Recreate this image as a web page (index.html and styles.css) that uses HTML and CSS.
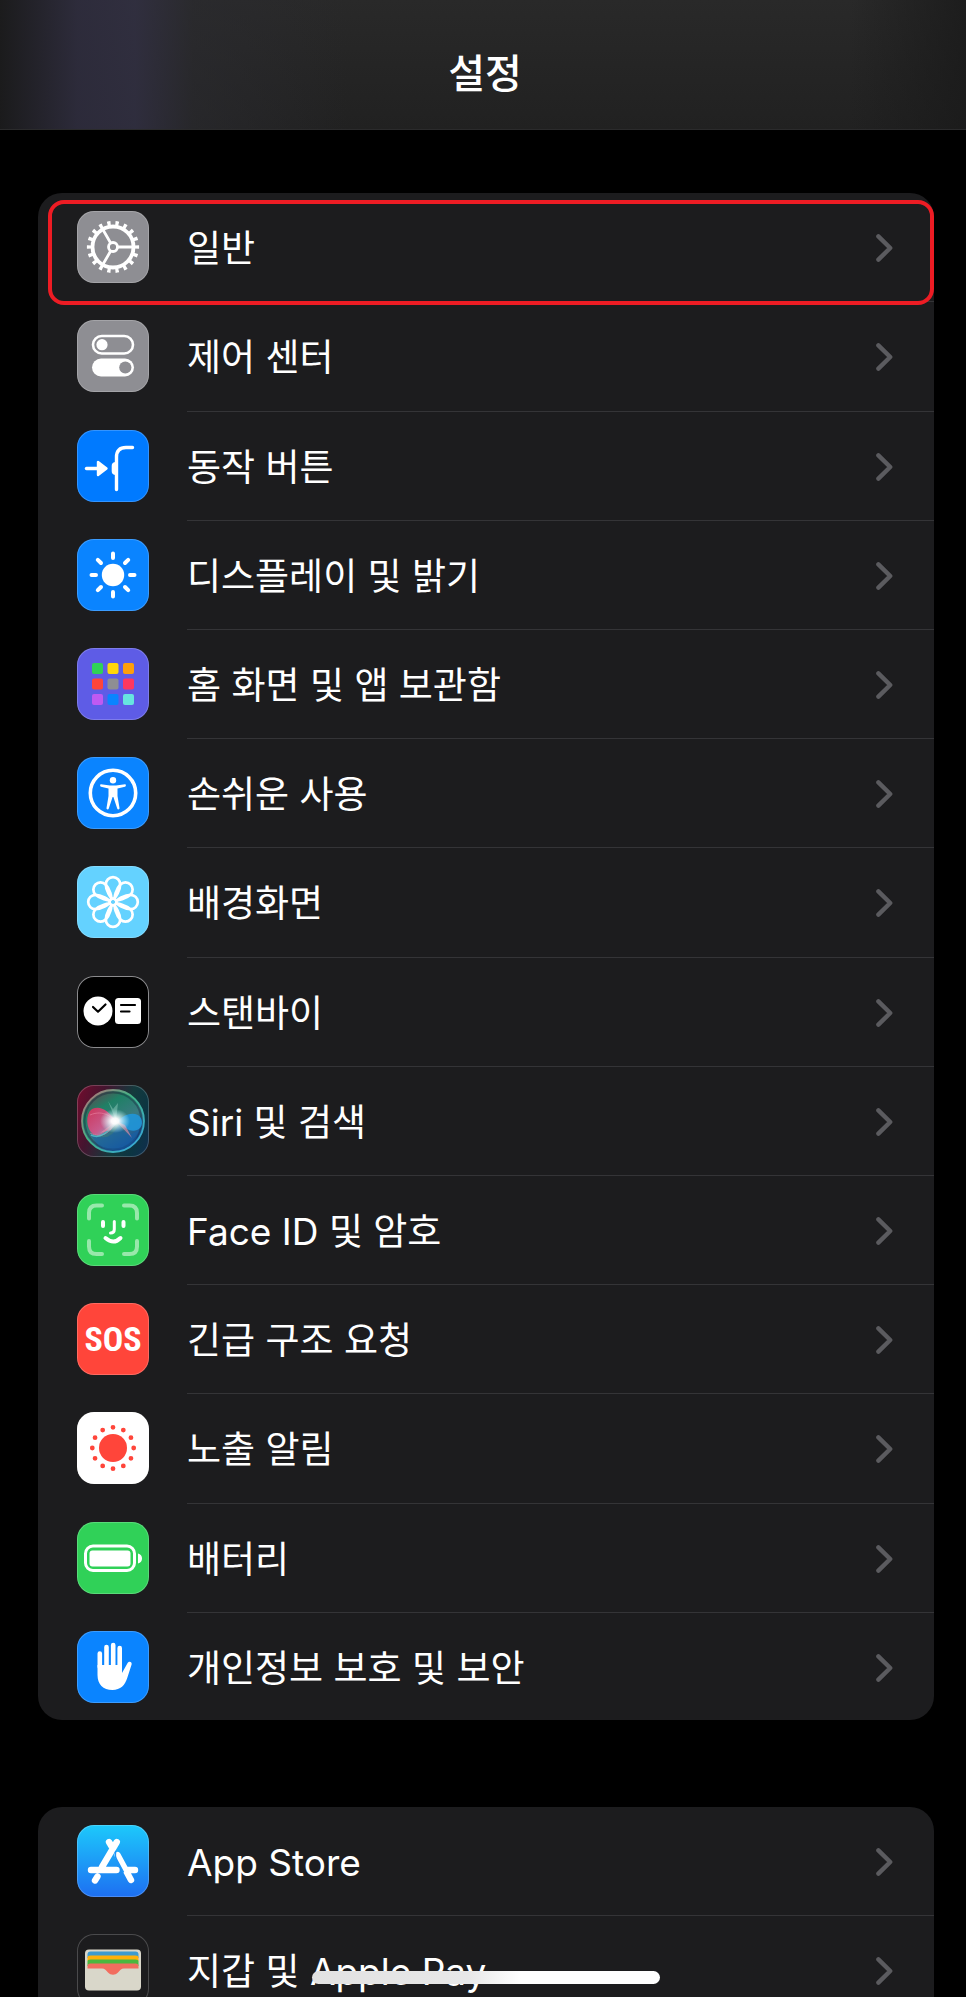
FILE: index.html
```html
<!DOCTYPE html>
<html lang="ko">
<head>
<meta charset="utf-8">
<meta name="viewport" content="width=device-width, initial-scale=1">
<title>설정</title>
<link rel="stylesheet" href="styles.css">
</head>
<body>
<svg class="defs" aria-hidden="true">
  <symbol id="chevron" viewBox="0 0 17 28"><path d="M2.4 2.4 14.2 14 2.4 25.600" fill="none" stroke="#5b5b5f" stroke-width="4.400" stroke-linecap="round" stroke-linejoin="round"/></symbol>
</svg>
<div class="screen">
  <header class="bar"><h1 class="title">설정</h1></header>
  <main class="content">
    <nav class="card" aria-label="기기 설정">
      <a class="row selected" href="#general">
        <svg class="icon gray" viewBox="0 0 72 72" aria-hidden="true">
          <g fill="none" stroke="#fff">
            <circle cx="36" cy="36" r="20.500" stroke-width="3.800"/>
            <circle cx="36" cy="36" r="23.800" stroke-width="4.600" pathLength="180" stroke-dasharray="4 6" stroke-dashoffset="2"/>
            <circle cx="36" cy="36" r="4.500" stroke-width="2.800"/>
            <path d="M41 36H56M33.500 31.700 26 18.700M33.500 40.300 26 53.300" stroke-width="2.800"/>
          </g>
        </svg>
        <span class="label">일반</span>
        <svg class="chevron" aria-hidden="true"><use href="#chevron"/></svg>
      </a>
      <a class="row" href="#control">
        <svg class="icon gray" viewBox="0 0 72 72" aria-hidden="true">
          <rect x="16" y="16" width="40" height="17.500" rx="8.750" fill="none" stroke="#fff" stroke-width="2.600"/>
          <circle cx="25" cy="24.700" r="5.600" fill="#fff"/>
          <rect x="15" y="38.500" width="42" height="18" rx="9" fill="#fff"/>
          <circle cx="48.300" cy="47.500" r="6.100" fill="#8e8e93"/>
        </svg>
        <span class="label">제어 센터</span>
        <svg class="chevron" aria-hidden="true"><use href="#chevron"/></svg>
      </a>
      <a class="row" href="#action">
        <svg class="icon azure" viewBox="0 0 72 72" aria-hidden="true">
          <path d="M9.500 38.500H21" stroke="#fff" stroke-width="3.400" stroke-linecap="round"/>
          <path d="M21 32v13l8.500-6.500z" fill="#fff" stroke="#fff" stroke-width="2.400" stroke-linejoin="round"/>
          <path d="M39.500 59.500V27q0-9.500 9.500-9.500h6.500" fill="none" stroke="#fff" stroke-width="3.400" stroke-linecap="round"/>
          <path d="M39 32c-3 0-4.300 1.500-4.300 4v5c0 2.500 1.300 4 4.300 4z" fill="#fff"/>
        </svg>
        <span class="label">동작 버튼</span>
        <svg class="chevron" aria-hidden="true"><use href="#chevron"/></svg>
      </a>
      <a class="row" href="#display">
        <svg class="icon blue" viewBox="0 0 72 72" aria-hidden="true">
          <circle cx="36" cy="36" r="11.200" fill="#fff"/>
          <path d="M36 14.500v4.500M36 53v4.500M14.500 36H19M53 36h4.500M20.800 20.800 24 24M48 48l3.200 3.200M51.200 20.800 48 24M24 48l-3.200 3.200" stroke="#fff" stroke-width="4" stroke-linecap="round"/>
        </svg>
        <span class="label">디스플레이 및 밝기</span>
        <svg class="chevron" aria-hidden="true"><use href="#chevron"/></svg>
      </a>
      <a class="row" href="#home">
        <svg class="icon indigo" viewBox="0 0 72 72" aria-hidden="true">
          <rect x="15" y="15" width="11" height="11" rx="2" fill="#30d158"/>
          <rect x="30.500" y="15" width="11" height="11" rx="2" fill="#ffd60a"/>
          <rect x="46" y="15" width="11" height="11" rx="2" fill="#ff9f0a"/>
          <rect x="15" y="30.500" width="11" height="11" rx="2" fill="#ff453a"/>
          <rect x="30.500" y="30.500" width="11" height="11" rx="2" fill="#8e8e93"/>
          <rect x="46" y="30.500" width="11" height="11" rx="2" fill="#ff375f"/>
          <rect x="15" y="46" width="11" height="11" rx="2" fill="#bf5af2"/>
          <rect x="30.500" y="46" width="11" height="11" rx="2" fill="#0a84ff"/>
          <rect x="46" y="46" width="11" height="11" rx="2" fill="#66e5e0"/>
        </svg>
        <span class="label">홈 화면 및 앱 보관함</span>
        <svg class="chevron" aria-hidden="true"><use href="#chevron"/></svg>
      </a>
      <a class="row" href="#accessibility">
        <svg class="icon blue" viewBox="0 0 72 72" aria-hidden="true">
          <circle cx="36" cy="36" r="22.700" fill="none" stroke="#fff" stroke-width="3.600"/>
          <circle cx="36" cy="23.200" r="3.200" fill="#fff"/>
          <path d="M24 27.200 33 28.600h6l9-1.400c1.200-.1 1.200 2.300 0 2.600l-7.500 1.600v7.600l2 12c.3 1.500-1.800 2-2.300.6L36.400 40h-.8l-3.800 11.600c-.5 1.400-2.600.9-2.300-.6l2-12v-7.600L24 29.800c-1.200-.3-1.200-2.700 0-2.600z" fill="#fff"/>
        </svg>
        <span class="label">손쉬운 사용</span>
        <svg class="chevron" aria-hidden="true"><use href="#chevron"/></svg>
      </a>
      <a class="row" href="#wallpaper">
        <svg class="icon sky" viewBox="0 0 72 72" aria-hidden="true">
          <defs><path id="petal" d="M36 32.800C33.500 32.800 28.800 24 28.800 18.400a7.200 7.200 0 0 1 14.400 0c0 5.600-4.700 14.400-7.200 14.400z"/></defs>
          <g fill="none" stroke="#fff" stroke-width="2.700">
            <use href="#petal"/><use href="#petal" transform="rotate(45 36 36)"/><use href="#petal" transform="rotate(90 36 36)"/><use href="#petal" transform="rotate(135 36 36)"/><use href="#petal" transform="rotate(180 36 36)"/><use href="#petal" transform="rotate(225 36 36)"/><use href="#petal" transform="rotate(270 36 36)"/><use href="#petal" transform="rotate(315 36 36)"/>
          </g>
        </svg>
        <span class="label">배경화면</span>
        <svg class="chevron" aria-hidden="true"><use href="#chevron"/></svg>
      </a>
      <a class="row" href="#standby">
        <svg class="icon black" viewBox="0 0 72 72" aria-hidden="true">
          <circle cx="21" cy="35" r="14.500" fill="#fff"/>
          <path d="m16 31 5 4.700 7.500-7.200" fill="none" stroke="#000" stroke-width="2.200" stroke-linecap="round" stroke-linejoin="round"/>
          <rect x="38" y="22" width="26" height="26" rx="3.500" fill="#fff"/>
          <path d="M44 29h14M44 35.500h8.500" stroke="#000" stroke-width="2.200" stroke-linecap="round"/>
        </svg>
        <span class="label">스탠바이</span>
        <svg class="chevron" aria-hidden="true"><use href="#chevron"/></svg>
      </a>
      <a class="row" href="#siri">
        <svg class="icon siri" viewBox="0 0 72 72" aria-hidden="true">
          <defs>
            <linearGradient id="orb" x1="0" y1="0" x2=".6" y2="1"><stop offset="0" stop-color="#7a3048"/><stop offset=".35" stop-color="#1f8065"/><stop offset=".65" stop-color="#3a7a80"/><stop offset="1" stop-color="#164f9d"/></linearGradient>
            <linearGradient id="rim" x1="0" y1="0" x2="1" y2="1"><stop offset="0" stop-color="#c46a78"/><stop offset=".45" stop-color="#41b586"/><stop offset="1" stop-color="#36a6e8"/></linearGradient>
            <linearGradient id="pink" x1="0" y1="0" x2="1" y2="1"><stop offset="0" stop-color="#e02d59"/><stop offset=".6" stop-color="#d9578e"/><stop offset="1" stop-color="#68c8da"/></linearGradient>
            <radialGradient id="glow"><stop offset="0" stop-color="#fff"/><stop offset=".25" stop-color="#fff" stop-opacity=".95"/><stop offset="1" stop-color="#bff" stop-opacity="0"/></radialGradient>
          </defs>
          <circle cx="36" cy="36" r="31" fill="url(#orb)" stroke="url(#rim)" stroke-width="1.800"/>
          <circle cx="36" cy="36" r="28.500" fill="none" stroke="#101830" stroke-opacity=".35" stroke-width="2"/>
          <path d="M13 48q20 12 29-9 8 18 21 4-5 22-27 22-16 0-23-17z" fill="#1560a5" opacity=".55"/>
          <path d="M39 36C31 25 23 20 15 24c-7 5-6 20 1 25 9 5 16-6 23-13z" fill="url(#pink)" opacity=".9"/>
          <path d="M13 30c14-6 22 3 27 7-8 11-15 17-27 11" fill="none" stroke="#ee86a5" stroke-opacity=".6"/>
          <path d="M14 50c10 5 17-4 25-13" fill="none" stroke="#57c3cf" stroke-opacity=".8" stroke-width="1.500"/>
          <path d="M40 36c8-7 15-9 21-6 6 4 5 13-1 15-7 3-13-3-20-9z" fill="#2096d9" opacity=".9"/>
          <path d="m39 36 16 17-7-13zM39 36 23 48l11-3z" fill="#ef8faa" opacity=".6"/>
          <path d="m39 36-8-20 5 8 5-6z" fill="#b9eedd" opacity=".35"/>
          <ellipse cx="38" cy="36" rx="15" ry="12" fill="url(#glow)"/>
        </svg>
        <span class="label">Siri 및 검색</span>
        <svg class="chevron" aria-hidden="true"><use href="#chevron"/></svg>
      </a>
      <a class="row" href="#faceid">
        <svg class="icon green" viewBox="0 0 72 72" aria-hidden="true">
          <path d="M12 24.500V19q0-7.500 7.500-7.500H25M47 11.500h5.500Q60 11.500 60 19v5.500M60 47v5.500q0 7.500-7.500 7.500H47M25 60h-5.500Q12 60 12 52.500V47" fill="none" stroke="#98e8ab" stroke-width="4" stroke-linecap="round"/>
          <path d="M26 28v4M46.500 28v4M28.500 44q8 7 15 0" fill="none" stroke="#fff" stroke-width="4" stroke-linecap="round"/>
          <path d="M37.300 27.500v8q0 3.500-3.800 3.500" fill="none" stroke="#fff" stroke-width="3" stroke-linecap="round"/>
        </svg>
        <span class="label">Face ID 및 암호</span>
        <svg class="chevron" aria-hidden="true"><use href="#chevron"/></svg>
      </a>
      <a class="row" href="#sos">
        <span class="icon red" aria-hidden="true">SOS</span>
        <span class="label">긴급 구조 요청</span>
        <svg class="chevron" aria-hidden="true"><use href="#chevron"/></svg>
      </a>
      <a class="row" href="#exposure">
        <svg class="icon white" viewBox="0 0 72 72" aria-hidden="true">
          <circle cx="36" cy="36" r="14" fill="#ff453a"/>
          <circle cx="36" cy="36" r="20.700" fill="none" stroke="#ff453a" stroke-width="4.800" stroke-linecap="round" pathLength="120" stroke-dasharray="0 10"/>
        </svg>
        <span class="label">노출 알림</span>
        <svg class="chevron" aria-hidden="true"><use href="#chevron"/></svg>
      </a>
      <a class="row" href="#battery">
        <svg class="icon green" viewBox="0 0 72 72" aria-hidden="true">
          <rect x="8.500" y="24" width="49" height="24.500" rx="7.500" fill="none" stroke="#fff" stroke-width="3"/>
          <rect x="12.500" y="28.500" width="41" height="16" rx="3" fill="#fff"/>
          <path d="M61 31.500q4 1 4 5t-4 5z" fill="#fff"/>
        </svg>
        <span class="label">배터리</span>
        <svg class="chevron" aria-hidden="true"><use href="#chevron"/></svg>
      </a>
      <a class="row" href="#privacy">
        <svg class="icon blue" viewBox="0 0 72 72" aria-hidden="true">
          <path d="M22.800 36V22.500M29.500 34V16M36.200 34V14M42.700 34V17" stroke="#fff" stroke-width="4.600" stroke-linecap="round"/>
          <path d="M20.500 34h24.500v8l5.600-10c1.500-2.500 4.700-1.200 4 1.600l-4.200 13C48 54.500 43.500 59 35.500 59 26 59 20.500 53 20.500 44z" fill="#fff"/>
        </svg>
        <span class="label">개인정보 보호 및 보안</span>
        <svg class="chevron" aria-hidden="true"><use href="#chevron"/></svg>
      </a>
    </nav>
    <nav class="card" aria-label="앱 설정">
      <a class="row" href="#appstore">
        <svg class="icon store" viewBox="0 0 72 72" aria-hidden="true">
          <g stroke="#fff" stroke-width="6.400" stroke-linecap="round" fill="none">
            <path d="M39.800 17 25 42M32 17l3 5M14 45h25.500M49 45h9M20.500 51.500 18 55.500M40.500 30 54 55"/>
          </g>
          <path d="M38.800 26q-1.500 4.500 1.200 9.500l6.500 12" fill="none" stroke="#1e95f8" stroke-width="1.600"/>
        </svg>
        <span class="label">App Store</span>
        <svg class="chevron" aria-hidden="true"><use href="#chevron"/></svg>
      </a>
      <a class="row" href="#wallet">
        <svg class="icon wallet" viewBox="0 0 72 72" aria-hidden="true">
          <rect x="8" y="15.500" width="56" height="41" rx="4" fill="#d9d7ca"/>
          <path d="M10.500 24v-3.500q0-3 3-3h45q3 0 3 3V24z" fill="#3d9bd0"/>
          <path d="M10.500 27v-3.500q0-2 3-2h45q3 0 3 2V27z" fill="#ffb10a"/>
          <path d="M10.500 32v-4.500q0-2 3-2h45q3 0 3 2V32z" fill="#4bb83f"/>
          <path d="M10.500 34.500V32q0-2.500 3-2.500h45q3 0 3 2.500v2.500H47c-3 0-4 2-6 4-3 3-7 3-10 0-2-2-3-4-6-4z" fill="#f26d5f"/>
        </svg>
        <span class="label">지갑 및 Apple Pay</span>
        <svg class="chevron" aria-hidden="true"><use href="#chevron"/></svg>
      </a>
    </nav>
  </main>
  <div class="home-area"><div class="home-indicator"></div></div>
</div>
</body>
</html>
```
FILE: styles.css
```css
* {
  box-sizing: border-box;
}

body {
  margin: 0;
  background: #000;
  color: #fff;
  font-family: Inter, "Noto Sans CJK KR", sans-serif;
}

.defs {
  position: absolute;
  width: 0;
  height: 0;
}

.screen {
  position: relative;
  height: 100vh;
  overflow: hidden;
}

.bar {
  display: flex;
  justify-content: center;
  height: 130px;
  padding: 48px 0 0 4px;
  border-bottom: 1px solid #2b2b2c;
  background:
    linear-gradient(90deg, rgba(26, 26, 27, 0.9), rgba(46, 44, 62, 0.85) 8%, rgba(50, 48, 68, 0.8) 14%, rgba(43, 43, 48, 0.6) 20%, rgba(40, 40, 40, 0) 36%, rgba(40, 40, 40, 0) 88%, rgba(26, 26, 26, 0.8)),
    linear-gradient(#292929, #212121);
}

.title {
  margin: 0;
  font-size: 40px;
  font-weight: 500;
  line-height: 52px;
}

.content {
  display: flex;
  flex-direction: column;
  gap: 87px;
  padding: 63px 32px 0 38px;
}

.card {
  border-radius: 24px;
  background: #1c1c1e;
}

.row {
  position: relative;
  display: flex;
  align-items: flex-start;
  gap: 38px;
  height: 109px;
  padding: 18px 41px 0 39px;
  color: inherit;
  text-decoration: none;
  background: linear-gradient(#343437, #343437) 149px 100% / 100% 1px no-repeat;
}

.row:nth-child(5n + 2) {
  height: 110px;
}

.row:last-child {
  height: 107px;
  background: none;
}

.selected::after {
  content: "";
  position: absolute;
  inset: 7px 0 -3px 10px;
  border: 4px solid #ed1c24;
  border-radius: 16px;
  z-index: 1;
}

.label {
  flex: 1;
  font-size: 37px;
  line-height: 76px;
  white-space: nowrap;
}

.chevron {
  align-self: flex-start;
  width: 17px;
  height: 74px;
}

.icon {
  flex: none;
  width: 72px;
  height: 72px;
  border-radius: 17px;
  box-shadow: inset 0 0 0 1px rgba(255, 255, 255, 0.2);
}

.gray { background: #8e8e93; }
.azure { background: #007aff; }
.blue { background: #0a84ff; }
.indigo { background: #5e5ce6; }
.sky { background: #64d2ff; }
.green { background: #30d158; }
.white { background: #fff; }

.black {
  background: #000;
  box-shadow: inset 0 0 0 1px #8a8a8d;
}

.siri {
  background: linear-gradient(110deg, #740b2d, #44152f 30%, #143a3d 60%, #0c3542 80%, #102d50);
}

.red {
  background: #ff453a;
  font-family: "Liberation Sans Narrow", "Roboto Condensed", "Open Sans Condensed", "Noto Sans CJK KR", sans-serif;
  font-size: 34px;
  font-weight: 700;
  line-height: 72px;
  text-align: center;
}

.store {
  background: linear-gradient(#1dc9fb, #1d6ff2);
}

.wallet {
  background: #1c1c1e;
  box-shadow: inset 0 0 0 1px #4a4a4c;
}

.home-area {
  position: absolute;
  inset: auto 32px 13px 38px;
  display: flex;
  justify-content: center;
}

.home-indicator {
  width: 348px;
  height: 13px;
  border-radius: 7px;
  background: linear-gradient(90deg, #e2e2e2, #e8e8e8 45%, #fff 60%);
}
```
